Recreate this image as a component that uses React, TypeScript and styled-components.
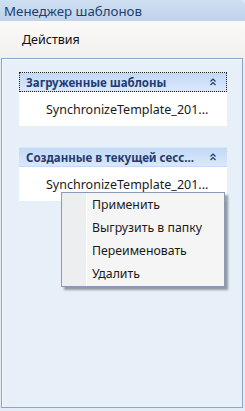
import React from "react";
import styled, { createGlobalStyle } from "styled-components";

const GlobalStyle = createGlobalStyle`
  html, body {
    margin: 0;
    padding: 0;
    background: #e4ecf6;
  }
  body {
    font-family: "Noto Sans", "Open Sans", sans-serif;
  }
`;

const Window = styled.div`
  position: relative;
  width: 245px;
  height: 411px;
  display: flex;
  flex-direction: column;
  overflow: hidden;
`;

const TitleBar = styled.div`
  height: 21px;
  display: flex;
  align-items: center;
  padding-left: 4px;
  background: linear-gradient(#cfdff3, #bfd3ec);
  border-top-right-radius: 5px;
  color: #1d3f6f;
  font-size: 13.3px;
`;

const MenuBar = styled.div`
  height: 37px;
  display: flex;
  align-items: center;
  padding-left: 22px;
  background: linear-gradient(#fbfaf9, #f1f0ee);
  color: #111;
  font-size: 12.5px;
`;

const Panel = styled.div`
  flex: 1;
  margin: 0 2px 3px 1px;
  padding: 13px 15px 0 17px;
  background: #e7eff9;
  border: 1px solid #8ea6c6;
  box-shadow: inset 1px 1px 0 #f7fafd;
`;

const Group = styled.div`
  margin-bottom: 21px;
`;

const GroupHeader = styled.div<{ $focused?: boolean }>`
  height: 20px;
  box-sizing: border-box;
  display: flex;
  align-items: center;
  justify-content: space-between;
  padding: 0 9px 0 6px;
  background: linear-gradient(#c3d9f6, #dae8fa);
  border: 1px dotted ${(p) => (p.$focused ? "#222" : "transparent")};
  color: #1f3c72;
  font-size: 11.5px;
  font-weight: bold;
`;

const GroupBody = styled.div`
  height: 34px;
  display: flex;
  align-items: center;
  padding-left: 27px;
  background: #fff;
  color: #1a1a1a;
  font-size: 12.5px;
  white-space: nowrap;
`;

const Menu = styled.div`
  position: absolute;
  left: 61px;
  top: 192px;
  width: 164px;
  box-sizing: border-box;
  padding: 0 0 1px;
  display: flex;
  flex-direction: column;
  background: linear-gradient(90deg, #eceeef 0, #eceeef 24px, #ffffff 24px, #ffffff 25px, #f5f5f5 25px);
  border: 1px solid #8a9bb4;
  box-shadow: 3px 3px 2px rgba(80, 80, 90, 0.55);
`;

const MenuItem = styled.div`
  height: 23px;
  display: flex;
  align-items: center;
  padding-left: 30px;
  color: #1a1a1a;
  font-size: 12.3px;
`;

const Chevron = () => (
  <svg width="8" height="8" viewBox="0 0 8 8" fill="none" stroke="#1f3c72" strokeWidth="1.2">
    <path d="M1.5 3.5L4 1L6.5 3.5" />
    <path d="M1.5 7L4 4.5L6.5 7" />
  </svg>
);

const items = ["Применить", "Выгрузить в папку", "Переименовать", "Удалить"];

const App: React.FC = () => (
  <Window>
    <GlobalStyle />
    <TitleBar>Менеджер шаблонов</TitleBar>
    <MenuBar>Действия</MenuBar>
    <Panel>
      <Group>
        <GroupHeader $focused>
          <span>Загруженные шаблоны</span>
          <Chevron />
        </GroupHeader>
        <GroupBody>SynchronizeTemplate_201...</GroupBody>
      </Group>
      <Group>
        <GroupHeader>
          <span>Созданные в текущей сесс...</span>
          <Chevron />
        </GroupHeader>
        <GroupBody>SynchronizeTemplate_201...</GroupBody>
      </Group>
    </Panel>
    <Menu>
      {items.map((item) => (
        <MenuItem key={item}>{item}</MenuItem>
      ))}
    </Menu>
  </Window>
);

export default App;
